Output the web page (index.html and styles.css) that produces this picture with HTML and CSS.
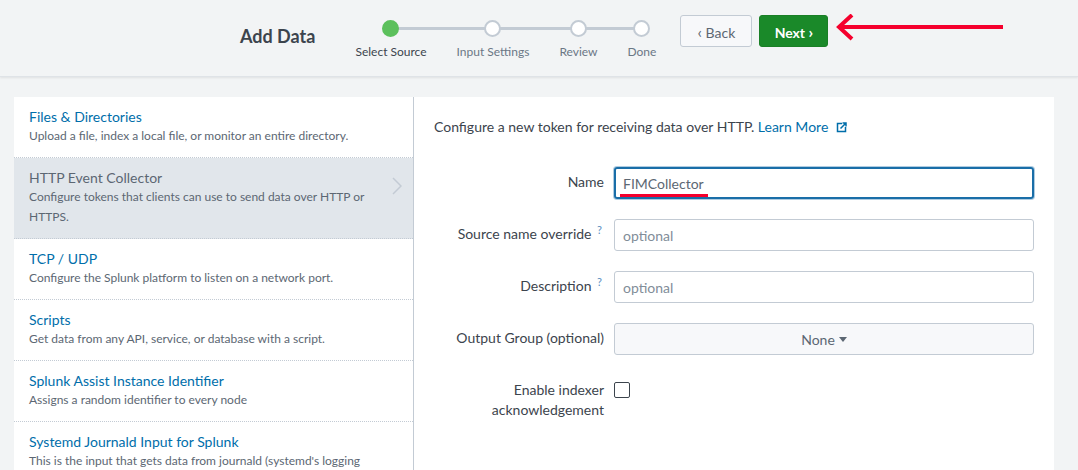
FILE: index.html
```html
<!DOCTYPE html>
<html>
<head>
<meta charset="utf-8">
<link rel="stylesheet" href="styles.css">
</head>
<body>
<header class="topbar">
  <h1 class="title">Add Data</h1>
  <div class="steps">
    <div class="steps-line"></div>
    <div class="step active"><span class="dot"></span><span class="step-label">Select Source</span></div>
    <div class="step"><span class="dot"></span><span class="step-label">Input Settings</span></div>
    <div class="step"><span class="dot"></span><span class="step-label">Review</span></div>
    <div class="step"><span class="dot"></span><span class="step-label">Done</span></div>
  </div>
  <div class="actions">
    <button class="btn btn-back"><span class="chev">&#8249;</span> Back</button>
    <button class="btn btn-next">Next <span class="chev">&#8250;</span></button>
  </div>
  <svg class="red-arrow" width="170" height="28" viewBox="0 0 170 28">
    <line x1="6" y1="13" x2="168" y2="13" stroke="#f5002d" stroke-width="4"/>
    <polyline points="17,1 4,13 17,25" fill="none" stroke="#f5002d" stroke-width="4"/>
  </svg>
</header>

<main class="content">
  <aside class="sources">
    <div class="source">
      <div class="source-title">Files &amp; Directories</div>
      <div class="source-desc">Upload a file, index a local file, or monitor an entire directory.</div>
    </div>
    <div class="source selected">
      <div class="source-title">HTTP Event Collector</div>
      <div class="source-desc">Configure tokens that clients can use to send data over HTTP or HTTPS.</div>
      <svg class="source-chev" width="10" height="18" viewBox="0 0 10 18"><polyline points="1,1 9,9 1,17" fill="none" stroke="#c3cbd4" stroke-width="1.5"/></svg>
    </div>
    <div class="source">
      <div class="source-title">TCP / UDP</div>
      <div class="source-desc">Configure the Splunk platform to listen on a network port.</div>
    </div>
    <div class="source">
      <div class="source-title">Scripts</div>
      <div class="source-desc">Get data from any API, service, or database with a script.</div>
    </div>
    <div class="source">
      <div class="source-title">Splunk Assist Instance Identifier</div>
      <div class="source-desc">Assigns a random identifier to every node</div>
    </div>
    <div class="source">
      <div class="source-title">Systemd Journald Input for Splunk</div>
      <div class="source-desc">This is the input that gets data from journald (systemd's logging</div>
    </div>
  </aside>

  <section class="panel">
    <p class="intro">Configure a new token for receiving data over HTTP. <a class="link">Learn More <svg class="ext" width="11" height="11" viewBox="0 0 11 11"><path d="M6 1.5H1.5V9.5H9.5V5" fill="none" stroke="#006eaa" stroke-width="1.5"/><path d="M4.5 6.5L9.5 1.5M6.5 1H10V4.5" fill="none" stroke="#006eaa" stroke-width="1.5"/></svg></a></p>

    <div class="form">
      <div class="row">
        <label class="label">Name</label>
        <div class="control"><div class="input focused"><span class="value">FIMCollector</span></div></div>
      </div>
      <div class="row">
        <label class="label">Source name override <sup class="q">?</sup></label>
        <div class="control"><div class="input"><span class="ph">optional</span></div></div>
      </div>
      <div class="row">
        <label class="label">Description <sup class="q">?</sup></label>
        <div class="control"><div class="input"><span class="ph">optional</span></div></div>
      </div>
      <div class="row">
        <label class="label">Output Group (optional)</label>
        <div class="control"><div class="select">None <span class="caret"></span></div></div>
      </div>
      <div class="row">
        <label class="label">Enable indexer<br>acknowledgement</label>
        <div class="control"><span class="checkbox"></span></div>
      </div>
    </div>
  </section>
</main>
</body>
</html>
```

FILE: styles.css
```css
* { box-sizing: border-box; }
html, body { margin: 0; padding: 0; }
body {
  background: #f2f4f5;
  font-family: Lato, "Liberation Sans", sans-serif;
  color: #3c444d;
  height: 470px;
  overflow: hidden;
}

.topbar {
  height: 77px;
  display: flex;
  align-items: flex-start;
  padding-left: 240px;
  background: #f2f4f5;
  border-bottom: 1px solid #dfe3e7;
  box-shadow: 0 1px 2px rgba(0,0,0,0.08);
}
.title {
  margin: 25px 0 0 0;
  font-size: 18px;
  line-height: 22px;
  font-weight: 700;
  color: #3c444d;
}

.steps {
  position: relative;
  display: flex;
  gap: 30px;
  margin: 20px 0 0 40px;
}
.steps-line {
  position: absolute;
  left: 36px;
  right: 15px;
  top: 7px;
  height: 3px;
  background: #c3cbd4;
}
.step {
  position: relative;
  display: flex;
  flex-direction: column;
  align-items: center;
}
.dot {
  width: 17px;
  height: 17px;
  border-radius: 50%;
  background: #fff;
  border: 2px solid #c3cbd4;
}
.step.active .dot {
  background: #5cc05c;
  border-color: #5cc05c;
}
.step-label {
  margin-top: 7px;
  font-size: 12px;
  line-height: 16px;
  color: #6b7785;
}
.step.active .step-label { color: #3c444d; }

.actions {
  display: flex;
  gap: 7px;
  margin: 15px 0 0 24px;
}
.btn {
  height: 32px;
  border-radius: 3px;
  font-family: Lato, "Liberation Sans", sans-serif;
  font-size: 14px;
  padding: 0 12px;
  cursor: pointer;
}
.btn-back {
  width: 72px;
  background: #f7f8fa;
  border: 1px solid #c3cbd4;
  color: #5c6773;
}
.btn-next {
  width: 69px;
  background: #1a8929;
  border: 1px solid #1a7f26;
  color: #fff;
  font-weight: 700;
}
.chev { font-size: 16px; }
.red-arrow { margin: 14px 0 0 7px; }

.content {
  display: flex;
  margin: 20px 24px 0 14px;
  height: 380px;
}
.sources {
  width: 400px;
  background: #fff;
  border-right: 1px solid #c3cbd4;
  overflow: hidden;
}
.source {
  position: relative;
  padding: 11px 15px 11px 15px;
  border-bottom: 1px dotted #c3cbd4;
}
.source-title {
  font-size: 14px;
  line-height: 18px;
  color: #006eaa;
}
.source-desc {
  font-size: 12px;
  line-height: 20px;
  color: #5c6773;
  padding-right: 30px;
}
.source.selected { background: #e1e6eb; }
.source.selected .source-title { color: #5c6773; }
.source-chev {
  position: absolute;
  right: 11px;
  top: 19px;
}

.panel {
  flex: 1;
  background: #fff;
  padding: 20px 20px 0 20px;
}
.intro {
  margin: 0 0 30px 0;
  font-size: 14px;
  line-height: 20px;
  color: #3c444d;
}
.link { color: #006eaa; }
.ext { vertical-align: -1px; margin-left: 4px; }

.form { display: flex; flex-direction: column; gap: 20px; }
.row { display: flex; gap: 10px; }
.label {
  width: 170px;
  text-align: right;
  font-size: 14px;
  line-height: 20px;
  padding-top: 5px;
  color: #3c444d;
}
.q {
  font-size: 11px;
  color: #5a8fbf;
  vertical-align: 5px;
  line-height: 0;
  margin-left: 2px;
  margin-right: 2px;
}
.control { width: 420px; }
.input {
  height: 32px;
  border: 1px solid #c3cbd4;
  border-radius: 3px;
  padding: 0 8px;
  display: flex;
  align-items: center;
  font-size: 14px;
}
.input.focused {
  border: 2px solid #1a6ea8;
  box-shadow: 0 0 0 1px rgba(26,110,168,0.35);
  padding-left: 7px;
}
.value {
  color: #5c6773;
  position: relative;
}
.value::after {
  content: "";
  position: absolute;
  left: -3px;
  right: -4px;
  bottom: -5px;
  height: 3px;
  background: #f5002d;
}
.ph { color: #818d99; }
.select {
  height: 32px;
  border: 1px solid #c3cbd4;
  border-radius: 3px;
  background: #f7f8fa;
  display: flex;
  align-items: center;
  justify-content: center;
  font-size: 14px;
  color: #5c6773;
  gap: 4px;
}
.caret {
  width: 0;
  height: 0;
  border-left: 4px solid transparent;
  border-right: 4px solid transparent;
  border-top: 5px solid #5c6773;
}
.checkbox {
  display: block;
  margin-top: 7px;
  width: 16px;
  height: 16px;
  border: 1px solid #3c444d;
  border-radius: 2px;
}
```
